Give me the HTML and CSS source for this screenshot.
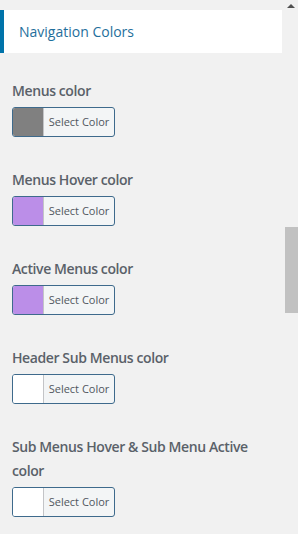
FILE: index.html
```html
<!DOCTYPE html>
<html lang="en">
<head>
  <meta charset="UTF-8" />
  <title>Navigation Colors</title>
  <meta name="viewport" content="width=device-width, initial-scale=1" />
  <link rel="stylesheet" href="styles.css">
</head>
<body>
  <div class="layout">
    <div class="panel">
      <div class="section-title">
        <h3>Navigation Colors</h3>
      </div>

      <div class="controls">
        <div class="control">
          <span class="label">Menus color</span>
          <button class="color-result">
            <span class="swatch swatch-gray"></span>
            <span class="result-text">Select Color</span>
          </button>
        </div>

        <div class="control">
          <span class="label">Menus Hover color</span>
          <button class="color-result">
            <span class="swatch swatch-purple"></span>
            <span class="result-text">Select Color</span>
          </button>
        </div>

        <div class="control">
          <span class="label">Active Menus color</span>
          <button class="color-result">
            <span class="swatch swatch-purple"></span>
            <span class="result-text">Select Color</span>
          </button>
        </div>

        <div class="control">
          <span class="label">Header Sub Menus color</span>
          <button class="color-result">
            <span class="swatch"></span>
            <span class="result-text">Select Color</span>
          </button>
        </div>

        <div class="control">
          <span class="label">Sub Menus Hover &amp; Sub Menu Active color</span>
          <button class="color-result">
            <span class="swatch"></span>
            <span class="result-text">Select Color</span>
          </button>
        </div>
      </div>
    </div>

    <div class="scrollbar">
      <span class="arrow-up"></span>
      <span class="thumb"></span>
    </div>
  </div>
</body>
</html>
```

FILE: styles.css
```css
html, body {
  height: 100%;
}
body {
  font-family: "Open Sans", Arial, sans-serif;
  margin: 0;
  background: #f1f1f1;
  color: #50575e;
  overflow: hidden;
}
.layout {
  display: flex;
  height: 100%;
}
.panel {
  flex: 1;
  padding-top: 10px;
}
.section-title {
  background: white;
  border-left: 4px solid #0073aa;
  margin-right: 2px;
  height: 43px;
  display: flex;
  align-items: center;
  padding-left: 15px;
}
.section-title h3 {
  margin: 0;
  font-size: 14px;
  font-weight: 400;
  color: #1f6f9c;
}
.controls {
  display: flex;
  flex-direction: column;
  gap: 31px;
  padding: 26px 12px 0 12px;
}
.control {
  display: flex;
  flex-direction: column;
  align-items: flex-start;
  gap: 4px;
}
.label {
  font-size: 14px;
  font-weight: 600;
  letter-spacing: -0.4px;
  line-height: 24px;
  color: #5a6169;
  padding-right: 12px;
}
.color-result {
  display: flex;
  height: 30px;
  width: 103px;
  padding: 0;
  border: 1px solid #3e6a8c;
  border-radius: 3px;
  background: #f3f5f6;
  overflow: hidden;
  cursor: pointer;
}
.swatch {
  width: 30px;
  height: 100%;
  background: white;
  border-right: 1px solid #c3c4c7;
}
.swatch-gray {
  background: #808080;
}
.swatch-purple {
  background: #bb8ee8;
}
.result-text {
  flex: 1;
  font-family: "Open Sans", Arial, sans-serif;
  font-size: 11px;
  line-height: 28px;
  color: #50575e;
  text-align: center;
}
.scrollbar {
  width: 14px;
  display: flex;
  flex-direction: column;
  align-items: center;
}
.arrow-up {
  margin-top: 4px;
  width: 0;
  height: 0;
  border-left: 4px solid transparent;
  border-right: 4px solid transparent;
  border-bottom: 4px solid #505050;
}
.thumb {
  margin-top: 219px;
  width: 13px;
  height: 86px;
  background: #c1c1c1;
}
```
